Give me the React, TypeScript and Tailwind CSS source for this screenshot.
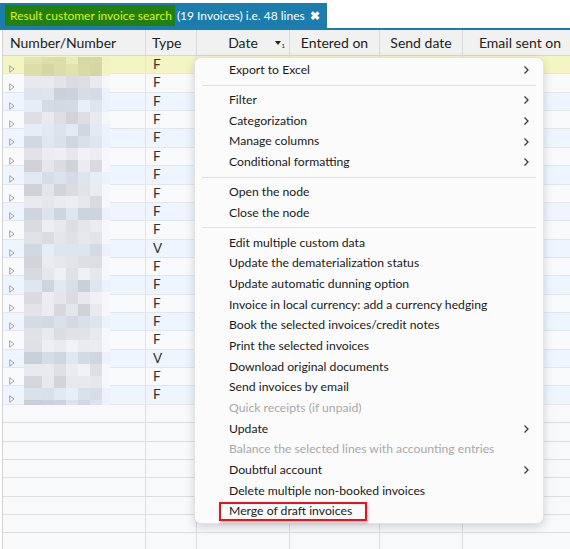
import React from "react";

const FONT = 'Lato, "Noto Sans", "Liberation Sans", sans-serif';

const types = "FFFFFFFFFFVFFFFFVFF".split("");
const ROW_H = 18.37;
const GRID_TOP = 56;

type Item =
  | { kind: "sep" }
  | { kind: "item"; label: string; sub?: boolean; disabled?: boolean; boxed?: boolean };

const menu: Item[] = [
  { kind: "item", label: "Export to Excel", sub: true },
  { kind: "sep" },
  { kind: "item", label: "Filter", sub: true },
  { kind: "item", label: "Categorization", sub: true },
  { kind: "item", label: "Manage columns", sub: true },
  { kind: "item", label: "Conditional formatting", sub: true },
  { kind: "sep" },
  { kind: "item", label: "Open the node" },
  { kind: "item", label: "Close the node" },
  { kind: "sep" },
  { kind: "item", label: "Edit multiple custom data" },
  { kind: "item", label: "Update the dematerialization status" },
  { kind: "item", label: "Update automatic dunning option" },
  { kind: "item", label: "Invoice in local currency: add a currency hedging" },
  { kind: "item", label: "Book the selected invoices/credit notes" },
  { kind: "item", label: "Print the selected invoices" },
  { kind: "item", label: "Download original documents" },
  { kind: "item", label: "Send invoices by email" },
  { kind: "item", label: "Quick receipts (if unpaid)", disabled: true },
  { kind: "item", label: "Update", sub: true },
  { kind: "item", label: "Balance the selected lines with accounting entries", disabled: true },
  { kind: "item", label: "Doubtful account", sub: true },
  { kind: "item", label: "Delete multiple non-booked invoices" },
  { kind: "item", label: "Merge of draft invoices", boxed: true },
];

function rowBg(i: number) {
  if (i === 0) return "bg-[#f5f5c4]";
  return i % 2 === 1 ? "bg-[#f9fafc]" : "bg-[#eef5fe]";
}

function rowRgb(i: number): [number, number, number] {
  if (i === 0) return [245, 245, 196];
  return i % 2 === 1 ? [249, 250, 252] : [238, 245, 254];
}

function Chevron() {
  return (
    <svg width="7" height="10" viewBox="0 0 7 10" className="ml-auto shrink-0">
      <path d="M1.5 1.5 L5 5 L1.5 8.5" fill="none" stroke="#3a3a3a" strokeWidth="1.3" />
    </svg>
  );
}

function Triangle() {
  return (
    <svg width="6" height="8" viewBox="0 0 6 8">
      <path d="M0.7 0.7 L5 4 L0.7 7.3 Z" fill="none" stroke="#a5a5a5" strokeWidth="1" />
    </svg>
  );
}

function Mosaic() {
  const cols = [
    [24, 18],
    [42, 12],
    [54, 12],
    [66, 12],
    [78, 12],
    [90, 12],
    [102, 8],
  ];
  const rows: [number, number][] = [[57, 7]];
  for (let y = 64; y < 405; y += 12) rows.push([y, Math.min(12, 405 - y)]);
  const blocks: React.ReactNode[] = [];
  rows.forEach(([y, h], r) => {
    const cy = y + h / 2;
    const ri = Math.max(0, Math.min(18, Math.floor((cy - GRID_TOP) / ROW_H)));
    const bg = rowRgb(ri);
    cols.forEach(([x, w], c) => {
      const s = Math.sin(r * 12.9898 + c * 78.233 + 3.1) * 43758.5453;
      const f = s - Math.floor(s);
      const dark = r % 2 === 1 ? 0.1 : 0.04;
      let t = dark + 0.2 * f;
      if (c === 6) t = 0.02;
      const g: [number, number, number] = ri === 0 ? [120, 120, 60] : [110, 116, 128];
      const col = bg.map((v, k) => Math.round(v * (1 - t) + g[k] * t));
      blocks.push(
        <div
          key={`${r}-${c}`}
          className="absolute"
          style={{
            left: x,
            top: y,
            width: w,
            height: h,
            background: `rgb(${col[0]},${col[1]},${col[2]})`,
          }}
        />
      );
    });
  });
  return <>{blocks}</>;
}

const C1 = "w-[143px] shrink-0";
const C2 = "w-[51px] shrink-0";
const C3 = "w-[93px] shrink-0";
const C4 = "w-[90px] shrink-0";
const C5 = "w-[83px] shrink-0";
const C6 = "w-[115px] shrink-0";

export default function App() {
  return (
    <div
      className="relative w-[570px] h-[549px] overflow-hidden bg-white text-[#222]"
      style={{ fontFamily: FONT }}
    >
      {/* Tab bar */}
      <div className="h-[30px] pt-[3px] border-b-2 border-[#1b7cae] flex">
        <div className="h-[25px] w-[327px] bg-[#1b7cae] flex items-center pl-[5px] text-[12px] text-white whitespace-nowrap">
          <span className="h-[21px] bg-[#22800f] text-[#dcf31c] pl-[5px] pr-[3px] flex items-center">
            Result customer invoice search
          </span>
          <span className="ml-[2px]">(19 Invoices) i.e. 48 lines</span>
          <span className="ml-[5px] text-[12px] font-bold">✖</span>
        </div>
      </div>

      {/* Grid */}
      <div className="ml-[2px] border-l border-[#d4d4d4] flex flex-col overflow-hidden">
        {/* Header */}
        <div className="h-[26px] flex bg-[#f1f1f1] border-b border-[#d8d8d8] text-[14px] text-[#222] whitespace-nowrap">
          <div className={`${C1} border-r border-[#dadada] pl-[7px] flex items-center`}>Number/Number</div>
          <div className={`${C2} border-r border-[#dadada] pl-[6px] flex items-center`}>Type</div>
          <div className={`${C3} relative border-r border-[#dadada] flex items-center justify-center`}>
            Date
            <span className="absolute right-[4px] top-[8px] flex items-start text-[#222]">
              <svg width="6" height="5" viewBox="0 0 6 5" className="mt-[3px]">
                <path d="M0 0 L6 0 L3 4 Z" fill="#222" />
              </svg>
              <span className="text-[6px] leading-none mt-[5px] ml-[1px]">1</span>
            </span>
          </div>
          <div className={`${C4} border-r border-[#dadada] flex items-center justify-center`}>Entered on</div>
          <div className={`${C5} border-r border-[#dadada] flex items-center justify-center`}>Send date</div>
          <div className={`${C6} border-r border-[#dadada] flex items-center justify-center`}>Email sent on</div>
        </div>

        {/* Data rows */}
        {types.map((t, i) => (
          <div key={i} className={`h-[18.37px] flex border-b border-[#e3e7ec] ${rowBg(i)}`}>
            <div className={`${C1} border-r border-[#e0e3e8] pl-[6px] pt-[9px] flex items-start`}>
              <Triangle />
            </div>
            <div className={`${C2} border-r border-[#e0e3e8] pl-[7px] text-[13.5px] leading-[17px] text-[#333]`}>{t}</div>
            <div className={`${C3} border-r border-[#e0e3e8]`} />
            <div className={`${C4} border-r border-[#e0e3e8]`} />
            <div className={`${C5} border-r border-[#e0e3e8]`} />
            <div className={`${C6} border-r border-[#e0e3e8]`} />
          </div>
        ))}

        {/* Empty rows */}
        {Array.from({ length: 9 }).map((_, i) => (
          <div key={`e${i}`} className="h-[18.37px] flex border-b border-[#dcdee2] bg-[#f8f9fa]">
            <div className={`${C1} border-r border-[#dcdee2]`} />
            <div className={`${C2} border-r border-[#dcdee2]`} />
            <div className={`${C3} border-r border-[#dcdee2]`} />
            <div className={`${C4} border-r border-[#dcdee2]`} />
            <div className={`${C5} border-r border-[#dcdee2]`} />
            <div className={`${C6} border-r border-[#dcdee2]`} />
          </div>
        ))}
      </div>

      {/* Blurred (pixelated) numbers */}
      <Mosaic />

      {/* Context menu */}
      <div className="absolute left-[194px] top-[57px] w-[350px] rounded-[7px] bg-[#fbfbfb] border border-[#e3e3e3] shadow-[0_3px_10px_rgba(0,0,0,0.16)] pt-[2px] pb-[1px] text-[12.2px] whitespace-nowrap">
        {menu.map((m, i) =>
          m.kind === "sep" ? (
            <div key={i} className="h-[9.4px] flex items-center px-[7px]">
              <div className="h-px w-full bg-[#e1e1e1]" />
            </div>
          ) : (
            <div
              key={i}
              className={`h-[20.65px] flex items-center pl-[34px] pr-[13px] ${
                m.disabled ? "text-[#a8a8a8]" : "text-[#1a1a1a]"
              }`}
            >
              {m.boxed ? (
                <span className="-ml-[10px] h-[19px] w-[148px] pl-[8px] flex items-center border-2 border-[#e8141c] shadow-[1px_2px_3px_rgba(0,0,0,0.25)]">
                  {m.label}
                </span>
              ) : (
                <span>{m.label}</span>
              )}
              {m.sub && <Chevron />}
            </div>
          )
        )}
      </div>
    </div>
  );
}
